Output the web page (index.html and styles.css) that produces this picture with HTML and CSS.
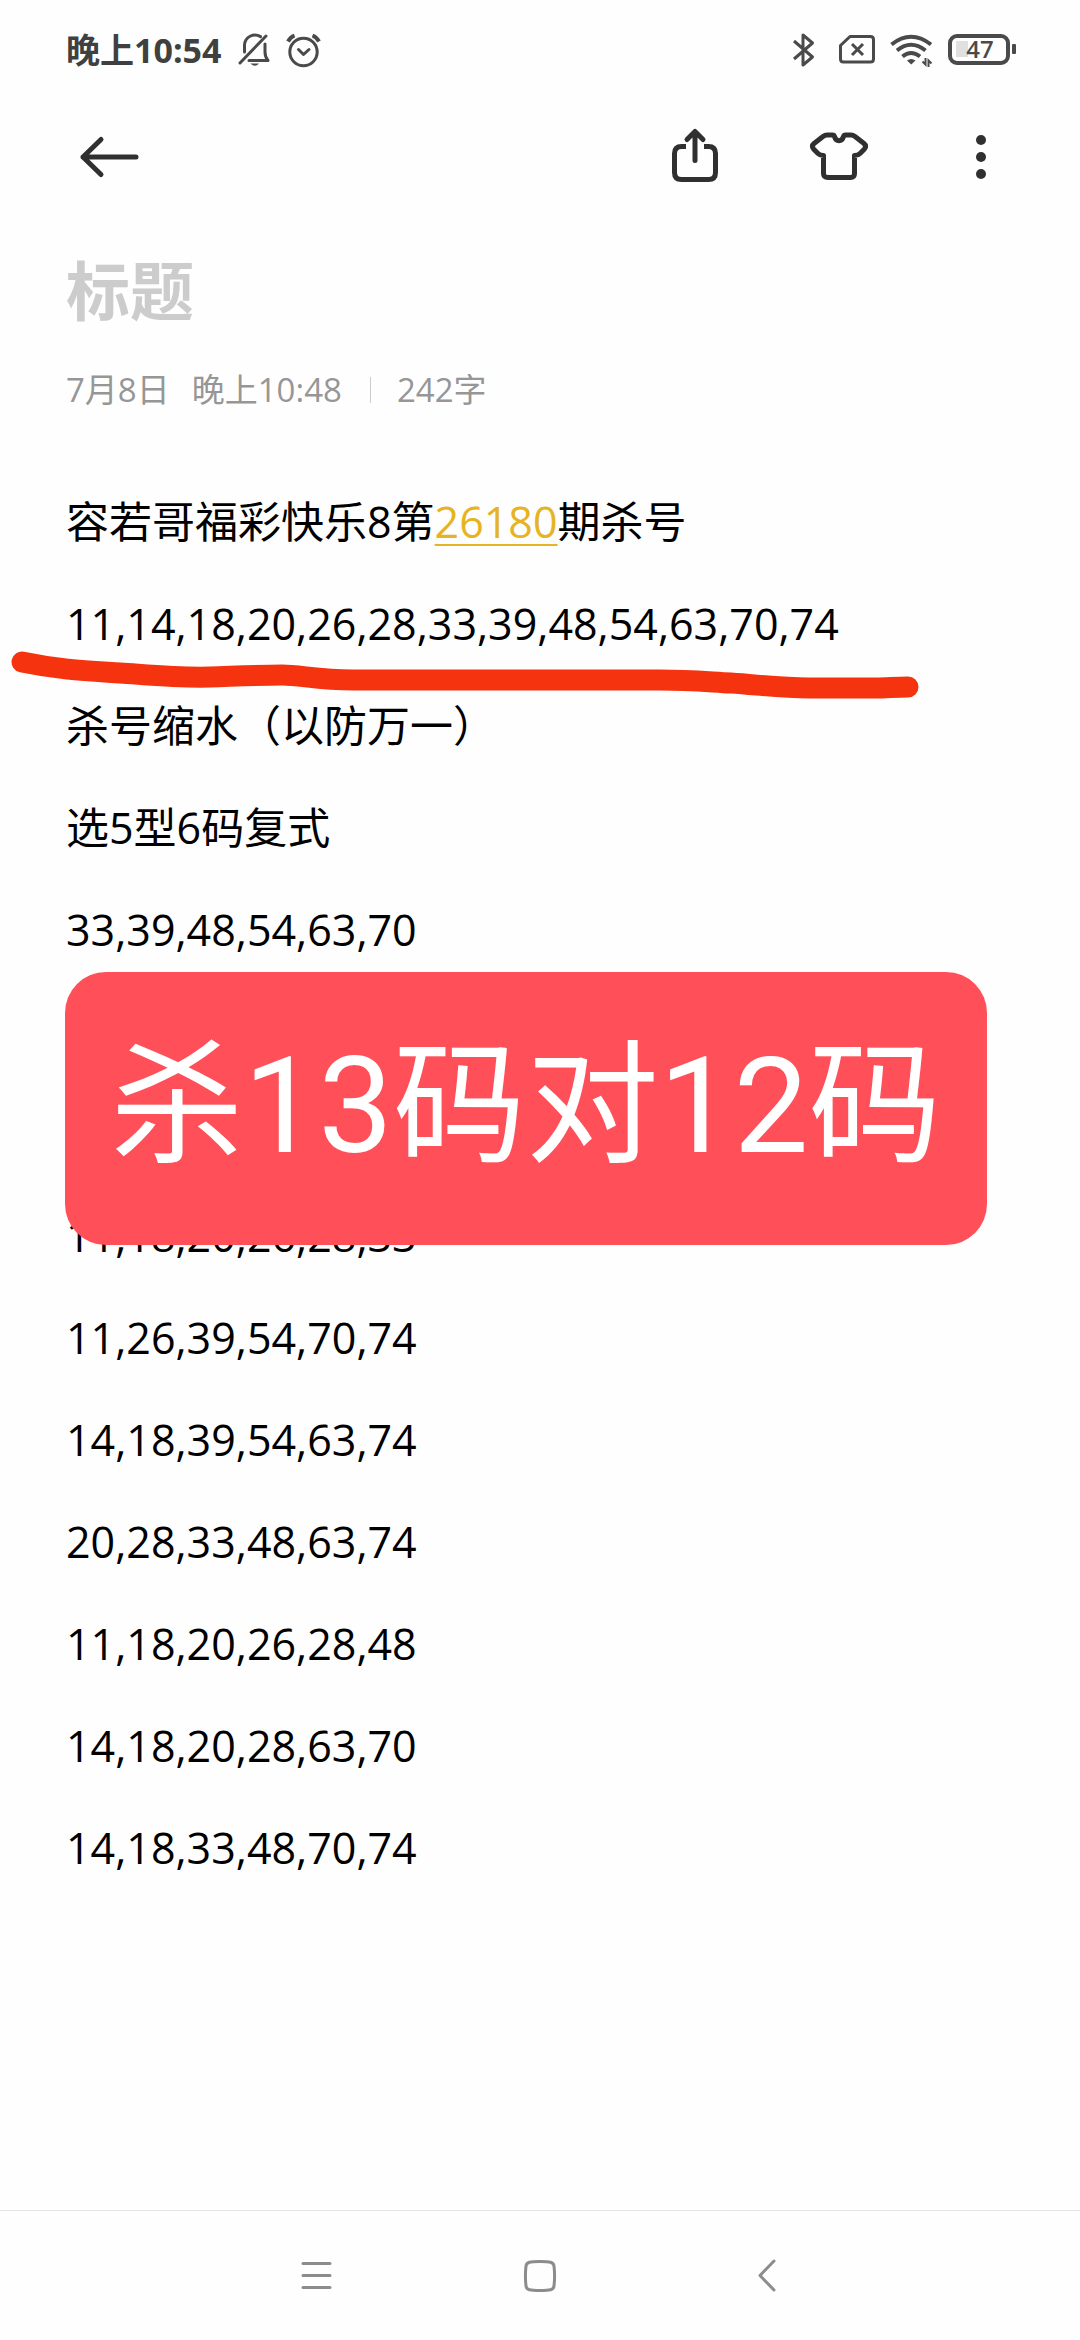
FILE: index.html
```html
<!DOCTYPE html>
<html lang="zh-CN">
<head>
<meta charset="utf-8">
<meta name="viewport" content="width=device-width, initial-scale=1">
<title>笔记</title>
<link rel="stylesheet" href="styles.css">
</head>
<body>
<div class="screen">
  <div class="status">
    <div class="status-group">
      <span class="clock">晚上10:54</span>
      <svg width="33" height="36" viewBox="0 0 33 36" fill="none" stroke="#4a4a4a" stroke-width="3" stroke-linecap="round" stroke-linejoin="round">
        <path d="M22.500 4.600A10.500 10.500 0 0 0 6.500 13V20M27 12V20Q27 25 30 28.500H11M2 31 28 4"/>
        <path d="M12.500 31.500H21Q17 36 12.500 31.500Z" fill="#4a4a4a" stroke="none"/>
      </svg>
      <svg width="36" height="36" viewBox="0 0 36 36" fill="none" stroke="#4a4a4a" stroke-width="3" stroke-linecap="round" stroke-linejoin="round">
        <circle cx="17.500" cy="20" r="13.700"/>
        <path d="M12.500 17.500 17.500 22.500 23 17.500"/>
        <path d="M2 9.500Q4.500 5 8.500 3.500M33 9.500Q30.500 5 26.500 3.500" stroke-width="4" stroke-linecap="butt"/>
      </svg>
    </div>
    <div class="status-group">
      <svg width="31" height="36" viewBox="0 0 31 36" fill="none" stroke="#4a4a4a" stroke-width="3" stroke-linejoin="round">
        <path d="M1 9 19.500 25 10 33V3L19.500 11 1 27"/>
      </svg>
      <svg width="36" height="36" viewBox="0 0 36 36" fill="none" stroke="#4a4a4a" stroke-width="3" stroke-linejoin="round">
        <path d="M11 4.500H31.500Q34.500 4.500 34.500 7.500V27Q34.500 30 31.500 30H4.500Q1.500 30 1.500 27V13.500Z"/>
        <path d="M13 12 24 23M24 12 13 23"/>
      </svg>
      <svg width="43" height="36" viewBox="0 0 43 36" fill="none" stroke="#4a4a4a" stroke-width="4">
        <path d="M1.500 12.500Q21 -3 41 12.500M7 18.500Q21 7 35.500 18.500M12.500 24.500Q21 17.500 30 24.500"/>
        <path d="M17 28.500Q21 25.500 25.500 28.500L21.200 32.500Z" fill="#4a4a4a" stroke="none"/>
        <path d="M32.500 29.500 35.500 32.500V26M38.500 35V28.500L41.500 31.500" stroke-width="2"/>
      </svg>
      <svg class="battery" width="68" height="36" viewBox="0 0 68 36">
        <rect x="8" y="9" width="12" height="16" fill="#e0e0e0"/>
        <rect x="2" y="4" width="58" height="27" rx="7" fill="none" stroke="#4a4a4a" stroke-width="4"/>
        <rect x="64" y="12" width="4" height="10" rx="1" fill="#4a4a4a"/>
        <text x="32" y="26" text-anchor="middle" fill="#4a4a4a">47</text>
      </svg>
    </div>
  </div>

  <header class="toolbar">
    <button class="tool" type="button" aria-label="返回">
      <svg width="60" height="60" viewBox="0 0 60 60" fill="none" stroke="#303030" stroke-width="5" stroke-linecap="round" stroke-linejoin="round"><path d="M57 30H4M22 12.500 4 30 22 47.500"/></svg>
    </button>
    <div class="tools">
      <button class="tool" type="button" aria-label="分享">
        <svg width="60" height="60" viewBox="0 0 60 60" fill="none" stroke="#303030" stroke-width="5" stroke-linecap="round" stroke-linejoin="round">
          <path d="M21 19.500H16.500Q9.500 19.500 9.500 26.500V45.500Q9.500 52.500 16.500 52.500H43.500Q50.500 52.500 50.500 45.500V26.500Q50.500 19.500 43.500 19.500H39" stroke-linecap="butt"/>
          <path d="M30 33.500V5M22 12.500 30 4.500 38 12.500"/>
        </svg>
      </button>
      <button class="tool" type="button" aria-label="皮肤">
        <svg width="60" height="60" viewBox="0 0 60 60" fill="none" stroke="#303030" stroke-width="5" stroke-linecap="round" stroke-linejoin="round">
          <path d="M18 8H23.500Q25 8 25.500 9.500C27 15 33 15 34.500 9.500Q35 8 36.500 8H42Q44 8 46 9.500L55 16.500Q58 19 55.500 22L51 26.500Q49 28.500 45.500 28.500V46.500Q45.500 50.500 41.500 50.500H19Q14.500 50.500 14.500 46.500V28.500Q11 28.500 9 26.500L4.500 22Q2 19 5 16.500L14 9.500Q16 8 18 8Z"/>
        </svg>
      </button>
      <button class="tool" type="button" aria-label="更多">
        <svg width="60" height="60" viewBox="0 0 60 60" fill="#303030"><circle cx="28" cy="13" r="5"/><circle cx="28" cy="30" r="5"/><circle cx="28" cy="47" r="5"/></svg>
      </button>
    </div>
  </header>

  <main class="note">
    <input class="title" type="text" placeholder="标题" aria-label="标题">
    <div class="meta">
      <span>7月8日</span>
      <span>晚上10:48</span>
      <span class="count">242字</span>
    </div>
    <div class="body">
      <p>容若哥福彩快乐8第<a href="#">26180</a>期杀号</p>
      <p>11,14,18,20,26,28,33,39,48,54,63,70,74</p>
      <p>杀号缩水（以防万一）</p>
      <p>选5型6码复式</p>
      <p>33,39,48,54,63,70</p>
      <p></p>
      <p></p>
      <p>11,18,20,26,28,33</p>
      <p>11,26,39,54,70,74</p>
      <p>14,18,39,54,63,74</p>
      <p>20,28,33,48,63,74</p>
      <p>11,18,20,26,28,48</p>
      <p>14,18,20,28,63,70</p>
      <p>14,18,33,48,70,74</p>
      <svg class="stroke" width="920" height="60" viewBox="0 0 920 60" fill="none" stroke="#f5330f" stroke-width="21" stroke-linecap="round" stroke-linejoin="round">
        <path d="M22 22C60 30 90 31 120 33C150 35 180 38 210 37C240 36 262 35 282 35C300 35 318 40 353 40H660C690 40 710 42 731 43C760 45 780 48 809 48H875C887 48 895 47 908 47"/>
      </svg>
      <div class="banner">杀13码对12码</div>
    </div>
  </main>

  <nav class="nav">
    <button class="tool" type="button" aria-label="最近任务">
      <svg width="36" height="36" viewBox="0 0 36 36" fill="none" stroke="#8c8c8c" stroke-width="3" stroke-linecap="round"><path d="M5 5.500H32M5 17.500H32M5 29.500H32"/></svg>
    </button>
    <button class="tool" type="button" aria-label="主页">
      <svg width="36" height="36" viewBox="0 0 36 36" fill="none" stroke="#8c8c8c" stroke-width="3"><path d="M18 3.500C28 3.500 31.500 4 32 8C32.700 14 32.700 22 32 28C31.500 32 28 32.500 18 32.500S4.500 32 4 28C3.300 22 3.300 14 4 8C4.500 4 8 3.500 18 3.500Z"/></svg>
    </button>
    <button class="tool" type="button" aria-label="返回上一级">
      <svg width="36" height="36" viewBox="0 0 36 36" fill="none" stroke="#8c8c8c" stroke-width="3" stroke-linecap="round" stroke-linejoin="round"><path d="M28 3 14 17.500 28 32"/></svg>
    </button>
  </nav>
</div>
</body>
</html>
```
FILE: styles.css
```css
* { box-sizing: border-box; }

body {
  margin: 0;
  background: #fefefe;
  color: #000;
  font-family: "Open Sans", "Noto Sans CJK SC", sans-serif;
}

.screen {
  display: flex;
  flex-direction: column;
  min-height: 100vh;
}

svg { display: block; }

.status {
  display: flex;
  align-items: center;
  justify-content: space-between;
  height: 100px;
  padding: 0 64px 0 66px;
}

.status-group {
  display: flex;
  align-items: center;
  gap: 15px;
}

.clock {
  margin-right: 2px;
  color: #404040;
  font-size: 34px;
  font-weight: 700;
  line-height: 48px;
}

.battery {
  font: 600 24px "Open Sans", sans-serif;
}

.toolbar {
  display: flex;
  align-items: center;
  justify-content: space-between;
  height: 114px;
  padding: 0 49px 0 61px;
}

.tools {
  display: flex;
  gap: 48px;
}

.tool {
  display: flex;
  align-items: center;
  justify-content: center;
  width: 96px;
  height: 96px;
  padding: 0;
  border: 0;
  background: none;
}

.note { padding: 25px 66px 0; }

.title {
  display: block;
  width: 100%;
  height: 96px;
  padding: 0;
  border: 0;
  outline: 0;
  background: none;
  font: 700 64px/96px "Noto Sans CJK SC", sans-serif;
}

.title::placeholder {
  color: #ccc;
  opacity: 1;
}

.meta {
  display: flex;
  align-items: center;
  gap: 22px;
  margin-top: 31px;
  color: #969696;
  font-size: 33px;
  line-height: 48px;
}

.count {
  display: flex;
  align-items: center;
  gap: 26px;
  margin-left: 6px;
}

.count::before {
  content: "";
  width: 1px;
  height: 26px;
  background: #ccc;
}

.body {
  position: relative;
  margin-top: 57px;
  font-size: 43px;
  line-height: 102px;
}

.body p {
  min-height: 102px;
  margin: 0;
}

.body a {
  color: #e6b422;
  text-decoration: underline;
  text-decoration-thickness: 2px;
  text-underline-offset: 6px;
}

/* hand-drawn marker line under the second row */
.stroke {
  position: absolute;
  top: 169px;
  left: -66px;
}

.banner {
  position: absolute;
  top: 501px;
  left: -1px;
  right: 27px;
  padding: 39px 0 42px;
  border-radius: 41px;
  background: #ff4f59;
  color: #fff;
  font-family: Roboto, "Noto Sans CJK SC", sans-serif;
  font-size: 133px;
  line-height: 192px;
  text-align: center;
  white-space: nowrap;
}

.nav {
  display: flex;
  align-items: center;
  justify-content: center;
  gap: 128px;
  height: 130px;
  margin-top: auto;
  border-top: 1px solid #e4e4e4;
}
```
